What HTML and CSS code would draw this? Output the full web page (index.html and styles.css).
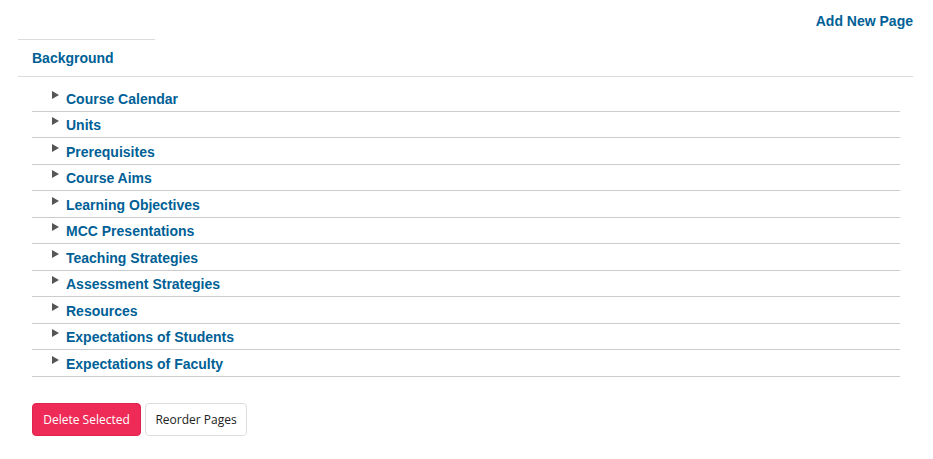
FILE: index.html
```html
<!DOCTYPE html>
<html>
<head>
<meta charset="utf-8">
<link rel="stylesheet" href="styles.css">
</head>
<body>
<div class="page">
  <div class="topbar"><a class="add-link" href="#">Add New Page</a></div>
  <div class="tabs">
    <div class="tab active"><a href="#">Background</a></div>
  </div>
  <ul class="tree">
    <li><span class="caret"></span><a href="#">Course Calendar</a></li>
    <li><span class="caret"></span><a href="#">Units</a></li>
    <li><span class="caret"></span><a href="#">Prerequisites</a></li>
    <li><span class="caret"></span><a href="#">Course Aims</a></li>
    <li><span class="caret"></span><a href="#">Learning Objectives</a></li>
    <li><span class="caret"></span><a href="#">MCC Presentations</a></li>
    <li><span class="caret"></span><a href="#">Teaching Strategies</a></li>
    <li><span class="caret"></span><a href="#">Assessment Strategies</a></li>
    <li><span class="caret"></span><a href="#">Resources</a></li>
    <li><span class="caret"></span><a href="#">Expectations of Students</a></li>
    <li><span class="caret"></span><a href="#">Expectations of Faculty</a></li>
  </ul>
  <div class="actions">
    <button class="btn btn-danger">Delete Selected</button>
    <button class="btn btn-default">Reorder Pages</button>
  </div>
</div>
</body>
</html>
```
FILE: styles.css
```css
html, body {
  margin: 0;
  padding: 0;
  background: #fff;
}
body {
  font-family: "Liberation Sans", Arial, sans-serif;
  font-size: 14px;
  color: #333;
}
a {
  color: #005f96;
  text-decoration: none;
  font-weight: bold;
}
.page {
  padding: 0 20px 0 18px;
}
.topbar {
  display: flex;
  justify-content: flex-end;
  padding-top: 13px;
  height: 26px;
  line-height: 16px;
}
.tabs {
  border-bottom: 1px solid #dcdcdc;
  display: flex;
}
.tab {
  width: 137px;
  border-top: 1px solid #dcdcdc;
  padding: 10px 14px 10px 14px;
  line-height: 16px;
  box-sizing: border-box;
  height: 37px;
}
.tree {
  list-style: none;
  margin: 8px 13px 0 14px;
  padding: 0;
}
.tree li {
  display: flex;
  align-items: center;
  height: 25.5px;
  border-bottom: 1px solid #cccccc;
  padding-left: 20px;
  line-height: 16px;
}
.tree li a {
  padding-top: 2px;
}
.caret {
  width: 0;
  height: 0;
  border-top: 4px solid transparent;
  border-bottom: 4px solid transparent;
  border-left: 7px solid #555;
  margin-right: 7px;
  margin-top: -6px;
}
.actions {
  display: flex;
  gap: 4px;
  margin: 26px 0 0 14px;
}
.btn {
  font-family: "Open Sans", sans-serif;
  font-size: 12px;
  height: 33px;
  border-radius: 4px;
  padding: 0;
  white-space: nowrap;
  cursor: pointer;
  box-sizing: border-box;
}
.btn-danger {
  background: #ee2b56;
  border: 1px solid #e0244e;
  color: #fff;
  width: 109px;
}
.btn-default {
  background: #fff;
  border: 1px solid #dddddd;
  color: #222;
  width: 102px;
}
```
